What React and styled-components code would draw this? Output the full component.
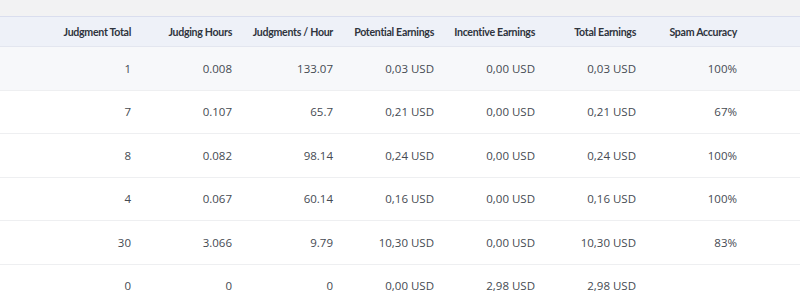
import React from "react";
import styled, { createGlobalStyle } from "styled-components";

const Global = createGlobalStyle`
  html, body { margin: 0; padding: 0; background: #ffffff; }
  body { font-family: "Open Sans", "Noto Sans", sans-serif; }
`;

const Page = styled.div`
  width: 800px;
  height: 305px;
  overflow: hidden;
  background: #ffffff;
`;

const TopBand = styled.div`
  height: 16px;
  background: #f2f2f3;
  border-bottom: 1px solid #dadeee;
`;

const Table = styled.table`
  width: 800px;
  border-collapse: collapse;
  table-layout: fixed;
`;

const HeadRow = styled.tr`
  background: #eef1f8;
  border-bottom: 1px solid #e3e6ef;
`;

const Th = styled.th`
  height: 29px;
  padding: 0 10px 0 0;
  text-align: right;
  font-family: "Lato", "Open Sans", sans-serif;
  font-size: 10.6px;
  font-weight: 700;
  letter-spacing: -0.3px;
  color: #2f343d;
  white-space: nowrap;
`;

const Row = styled.tr`
  background: ${(p) => (p.$highlight ? "#f7f8fa" : "#ffffff")};
  border-bottom: 1px solid #eeeff1;
`;

const Td = styled.td`
  height: 42.5px;
  padding: 0 10px 0 0;
  text-align: right;
  font-size: 11.5px;
  color: #454a52;
  white-space: nowrap;
`;

const cols = [
  "Judgment Total",
  "Judging Hours",
  "Judgments / Hour",
  "Potential Earnings",
  "Incentive Earnings",
  "Total Earnings",
  "Spam Accuracy",
];

const rows = [
  ["1", "0.008", "133.07", "0,03 USD", "0,00 USD", "0,03 USD", "100%"],
  ["7", "0.107", "65.7", "0,21 USD", "0,00 USD", "0,21 USD", "67%"],
  ["8", "0.082", "98.14", "0,24 USD", "0,00 USD", "0,24 USD", "100%"],
  ["4", "0.067", "60.14", "0,16 USD", "0,00 USD", "0,16 USD", "100%"],
  ["30", "3.066", "9.79", "10,30 USD", "0,00 USD", "10,30 USD", "83%"],
  ["0", "0", "0", "0,00 USD", "2,98 USD", "2,98 USD", ""],
];

export default function App() {
  return (
    <Page>
      <Global />
      <TopBand />
      <Table>
        <colgroup>
          <col style={{ width: 40 }} />
          {cols.map((c) => (
            <col key={c} style={{ width: 101 }} />
          ))}
          <col />
        </colgroup>
        <thead>
          <HeadRow>
            <Th />
            {cols.map((c) => (
              <Th key={c}>{c}</Th>
            ))}
            <Th />
          </HeadRow>
        </thead>
        <tbody>
          {rows.map((r, i) => (
            <Row key={i} $highlight={i === 0}>
              <Td />
              {r.map((v, j) => (
                <Td key={j}>{v}</Td>
              ))}
              <Td />
            </Row>
          ))}
        </tbody>
      </Table>
    </Page>
  );
}
